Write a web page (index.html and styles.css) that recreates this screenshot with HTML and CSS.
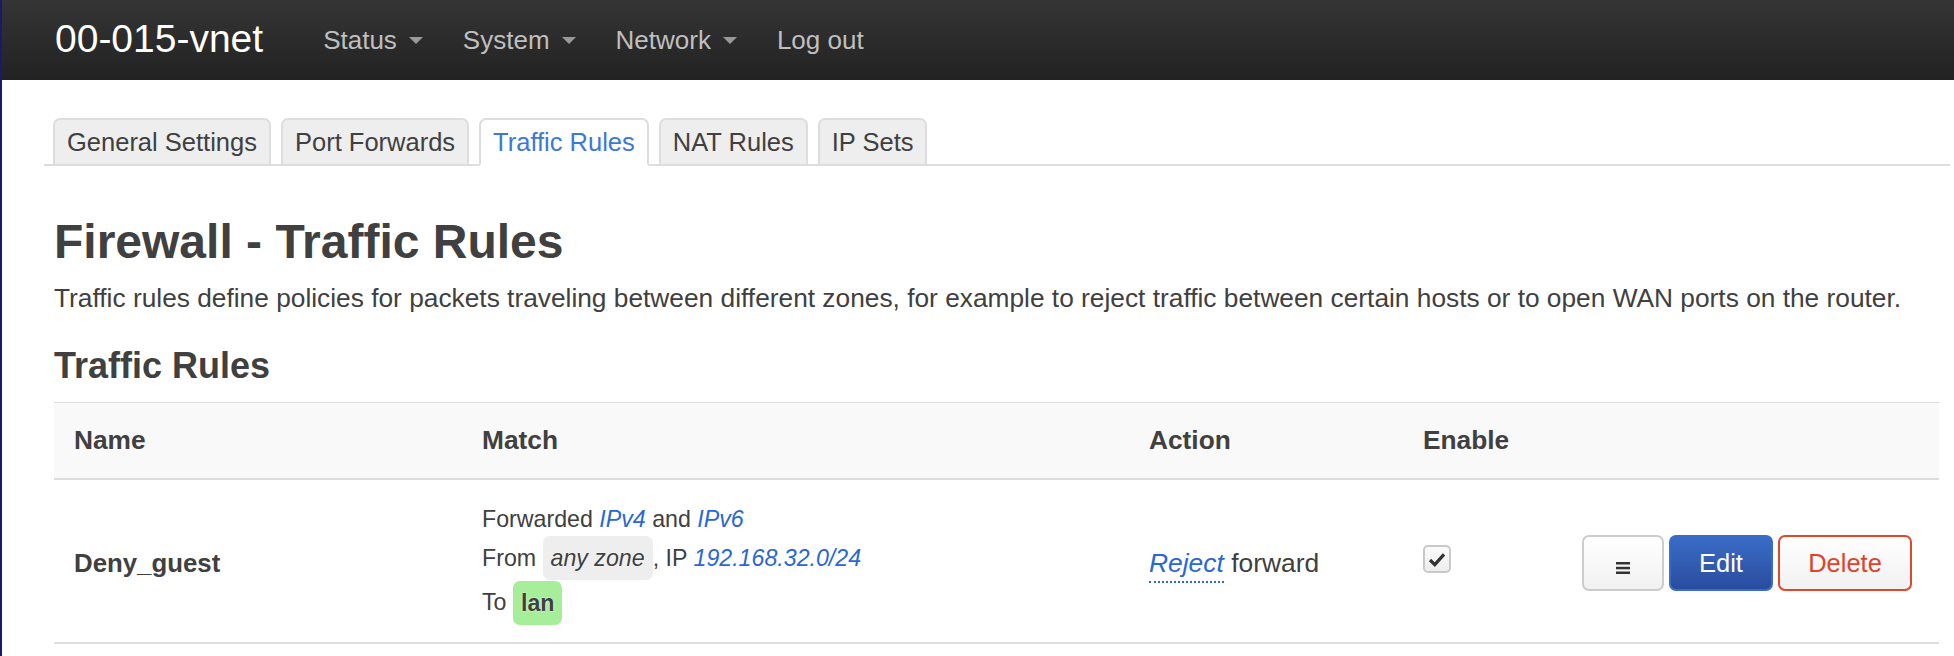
FILE: index.html
```html
<!DOCTYPE html>
<html lang="en">
<head>
    <meta charset="UTF-8">
    <title>00-015-vnet - Firewall - Traffic Rules</title>
    <link rel="stylesheet" href="styles.css">
</head>
<body>
    <header class="topbar">
        <a class="brand" href="#">00-015-vnet</a>
        <ul class="nav">
            <li><a href="#">Status<span class="caret"></span></a></li>
            <li><a href="#">System<span class="caret"></span></a></li>
            <li><a href="#">Network<span class="caret"></span></a></li>
            <li><a href="#">Log out</a></li>
        </ul>
    </header>

    <main class="container">
        <ul class="tabs">
            <li><a href="#">General Settings</a></li>
            <li><a href="#">Port Forwards</a></li>
            <li class="active"><a href="#">Traffic Rules</a></li>
            <li><a href="#">NAT Rules</a></li>
            <li><a href="#">IP Sets</a></li>
        </ul>

        <h1>Firewall - Traffic Rules</h1>
        <p class="desc">Traffic rules define policies for packets traveling between different zones, for example to reject traffic between certain hosts or to open WAN ports on the router.</p>

        <h3>Traffic Rules</h3>
        <table class="rules">
            <colgroup>
                <col class="c-name">
                <col class="c-match">
                <col class="c-action">
                <col class="c-enable">
                <col>
            </colgroup>
            <thead>
                <tr>
                    <th>Name</th>
                    <th>Match</th>
                    <th>Action</th>
                    <th>Enable</th>
                    <th></th>
                </tr>
            </thead>
            <tbody>
                <tr>
                    <td class="name">Deny_guest</td>
                    <td class="match">
                        <div class="first">Forwarded <var>IPv4</var> and <var>IPv6</var></div>
                        <div>From <span class="zone any">any zone</span>, IP <var>192.168.32.0/24</var></div>
                        <div>To <span class="zone lan">lan</span></div>
                    </td>
                    <td class="action"><var class="hint">Reject</var> forward</td>
                    <td class="enable">
                        <span class="checkbox">
                            <svg width="18" height="15" viewBox="0 0 18 15"><path d="M2 8 L6.8 12.6 L16 2.4" fill="none" stroke="#333" stroke-width="3.2"/></svg>
                        </span>
                    </td>
                    <td class="buttons">
                        <button class="btn drag" type="button">
                            <svg width="16" height="14" viewBox="0 0 16 14"><rect x="1" y="1" width="14" height="2.5" fill="#333"/><rect x="1" y="5.8" width="14" height="2.5" fill="#333"/><rect x="1" y="10.5" width="14" height="2.5" fill="#333"/></svg>
                        </button><button class="btn edit" type="button">Edit</button><button class="btn remove" type="button">Delete</button>
                    </td>
                </tr>
            </tbody>
        </table>
    </main>
</body>
</html>
```

FILE: styles.css
```css
html, body {
    height: 100%;
}

body {
    margin: 0;
    font-family: "Liberation Sans", Arial, Helvetica, sans-serif;
    color: #404040;
    background-color: #fff;
    border-left: 2px solid #1d1868;
    box-sizing: border-box;
}

a {
    text-decoration: none;
}

/* top bar */
.topbar {
    height: 80px;
    background: linear-gradient(#353535, #222);
    display: flex;
    align-items: center;
    padding-left: 53px;
}

.brand {
    color: #fff;
    font-size: 39px;
    line-height: 1;
    margin-right: 40px;
    margin-top: -4px;
}

.nav {
    list-style: none;
    margin: 0;
    padding: 0;
    display: flex;
}

.nav li a {
    display: block;
    padding: 0 20px;
    color: #bfbfbf;
    font-size: 26px;
    line-height: 78px;
}

.caret {
    display: inline-block;
    border-top: 7px solid #999;
    border-left: 7px solid transparent;
    border-right: 7px solid transparent;
    margin-left: 12px;
    vertical-align: middle;
    margin-top: -3px;
}

/* content */
.container {
    padding: 0 15px 0 52px;
}

.tabs {
    list-style: none;
    margin: 38px -11px 0 -10px;
    padding: 0 0 0 9px;
    display: flex;
    border-bottom: 2px solid #ddd;
}

.tabs li {
    margin: 0 10px -2px 0;
    border: 2px solid #ddd;
    border-radius: 7px 7px 0 0;
    background-color: #eee;
}

.tabs li a {
    display: block;
    padding: 7px 12px;
    line-height: 30px;
    font-size: 25.5px;
    color: #404040;
}

.tabs li.active {
    background-color: #fff;
    border-bottom-color: #fff;
}

.tabs li.active a {
    color: #3b78d8;
}

h1 {
    font-size: 48px;
    line-height: 52px;
    margin: 50px 0 0;
}

.desc {
    font-size: 26.3px;
    line-height: 33px;
    margin: 14px 0 0;
}

h3 {
    font-size: 36px;
    line-height: 38px;
    margin: 32px 0 0;
}

/* rules table */
.rules {
    width: 100%;
    table-layout: fixed;
    border-collapse: collapse;
    margin-top: 17px;
}

.c-name { width: 408px; }
.c-match { width: 667px; }
.c-action { width: 274px; }
.c-enable { width: 170px; }

.rules th {
    background-color: #f9f9f9;
    border-top: 1px solid #ddd;
    border-bottom: 2px solid #ddd;
    height: 75px;
    padding: 0 20px;
    text-align: left;
    font-size: 26.3px;
    vertical-align: middle;
}

.rules td {
    border-bottom: 2px solid #ddd;
    padding: 22px 20px 18px;
    vertical-align: middle;
}

var {
    font-style: italic;
    color: #2a67d6;
}

.name {
    font-weight: bold;
    font-size: 25.8px;
}

.match {
    font-size: 23.2px;
}

.match div {
    height: 44px;
    line-height: 44px;
    white-space: nowrap;
}

.match div.first {
    height: 34px;
    line-height: 34px;
}

.zone {
    display: inline-block;
    vertical-align: top;
    padding: 0 8px;
    border-radius: 7px;
    text-shadow: 0 0 2px #fff;
}

.zone.any {
    background-color: #eee;
    font-style: italic;
}

.zone.lan {
    background-color: #a6ee99;
    font-weight: bold;
    margin-top: 1px;
}

.action {
    font-size: 26.4px;
}

.hint {
    padding-bottom: 3px;
    border-bottom: 2px dotted #2a67d6;
}

.checkbox {
    display: inline-flex;
    align-items: center;
    justify-content: center;
    width: 24px;
    height: 24px;
    border: 2px solid #c9c9c9;
    border-radius: 5px;
    background: linear-gradient(#fbfbfb, #eee);
    margin-top: -8px;
}

.buttons {
    text-align: right;
    white-space: nowrap;
}

.rules td.buttons {
    padding-left: 0;
    padding-right: 27px;
}

.btn {
    height: 56px;
    border: 2px solid #ccc;
    border-radius: 7px;
    font-family: inherit;
    font-size: 25.5px;
    padding: 0 28px;
    margin-left: 5px;
    vertical-align: middle;
    cursor: pointer;
    background: linear-gradient(#fff, #f1f1f1);
}

.btn.drag {
    width: 82px;
    padding: 6px 0 0;
}

.btn.edit {
    width: 104px;
    padding: 0;
    color: #fff;
    border-color: #3a6cc9;
    background: linear-gradient(#3a6cc6, #2a4c9e);
}

.btn.remove {
    width: 134px;
    padding: 0;
    color: #e0432a;
    border-color: #e0472b;
}
```
